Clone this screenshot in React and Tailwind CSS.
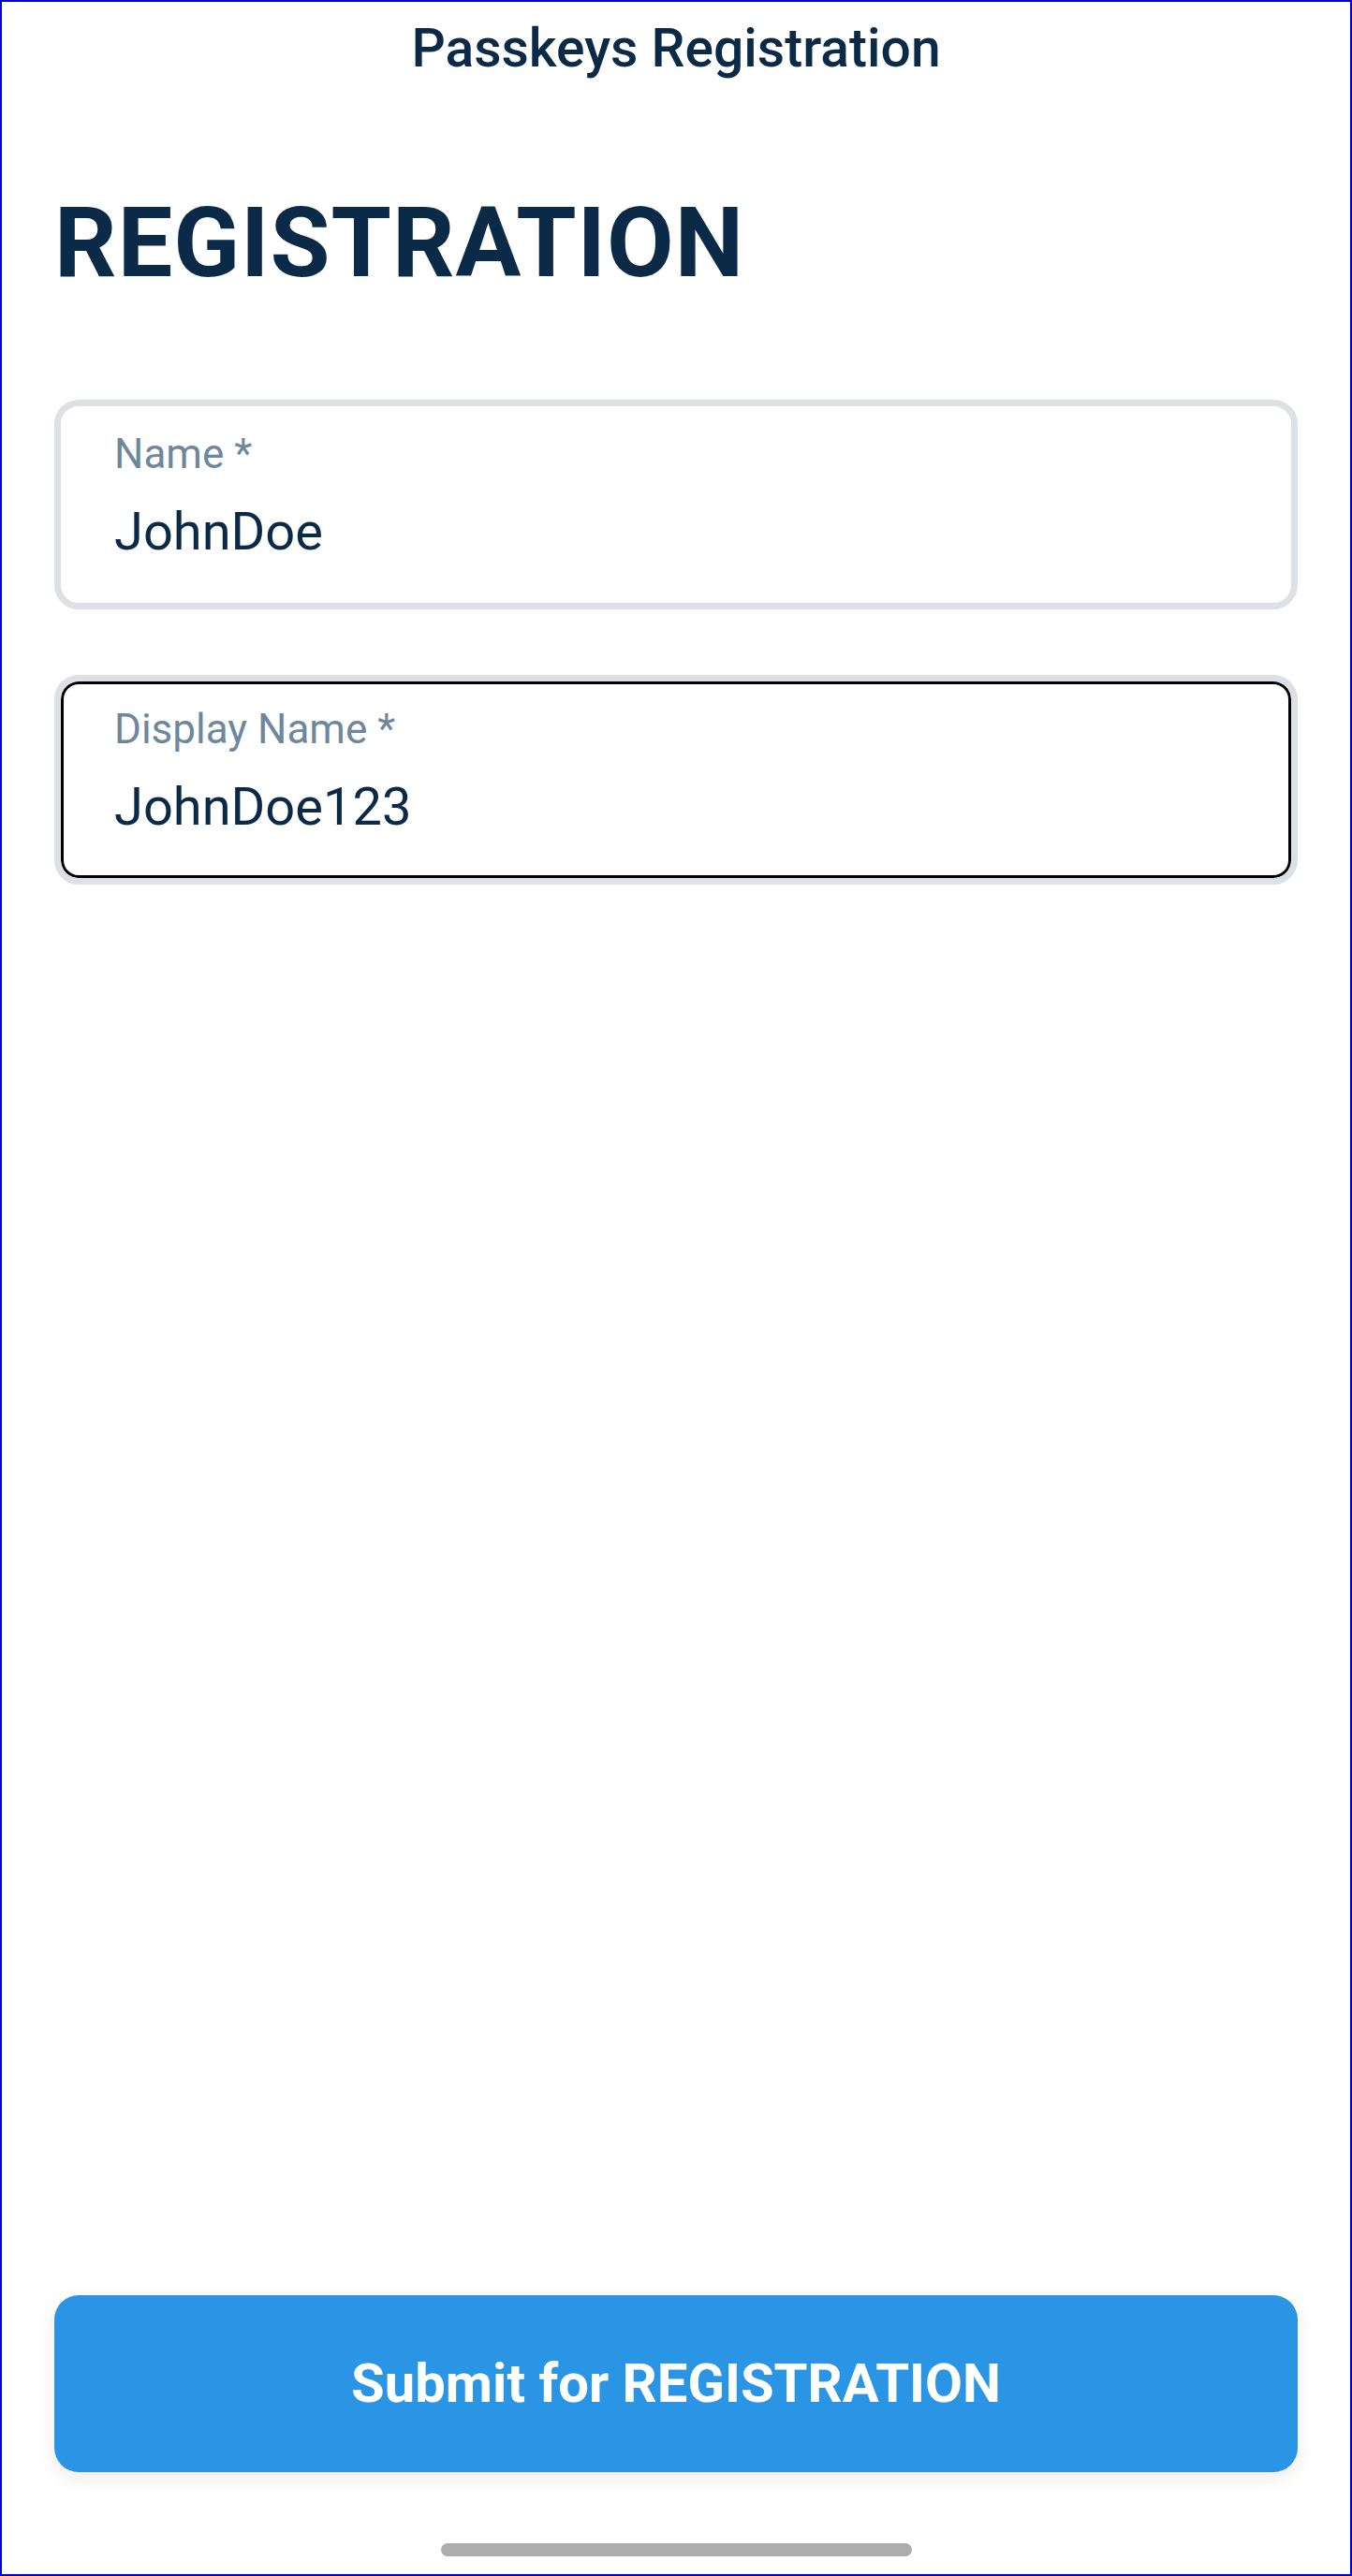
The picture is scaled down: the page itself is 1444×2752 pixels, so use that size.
import React from 'react';

const font = { fontFamily: 'Roboto, "Noto Sans", sans-serif' };

function Field({ label, value, focused }) {
  return (
    <div
      className={`h-[224px] rounded-[26px] border-[7px] border-[#dde1e6] bg-white pl-[57px] pt-[25px] ${
        focused ? 'shadow-[inset_0_0_0_3px_#000]' : ''
      }`}
    >
      <div className="text-[44px] leading-[52px] text-[#6f879c]">{label}</div>
      <div className="mt-[25px] text-[56px] leading-[64px] text-[#0b2a48]">{value}</div>
    </div>
  );
}

export default function App() {
  return (
    <div
      className="flex h-[2752px] w-[1444px] flex-col border-2 border-[#0000d8] bg-white px-[56px]"
      style={font}
    >
      <div className="pt-[18px] text-center text-[57px] font-medium leading-[64px] text-[#0b2a48]">
        Passkeys Registration
      </div>

      <h1 className="mt-[124px] text-[104px] font-bold leading-[104px] tracking-[1px] text-[#0b2a48]">
        REGISTRATION
      </h1>

      <div className="mt-[115px] flex flex-col gap-[70px]">
        <Field label="Name *" value="JohnDoe" />
        <Field label="Display Name *" value="JohnDoe123" focused />
      </div>

      <div className="flex-1" />

      <button className="h-[189px] w-full rounded-[26px] bg-[#2b95e5] text-[58px] font-bold text-white shadow-[0_6px_18px_rgba(120,90,40,0.12)]">
        Submit for REGISTRATION
      </button>

      <div className="mt-[76px] mb-[19px] flex justify-center">
        <div className="h-[14px] w-[503px] rounded-full bg-[#adadad]" />
      </div>
    </div>
  );
}
